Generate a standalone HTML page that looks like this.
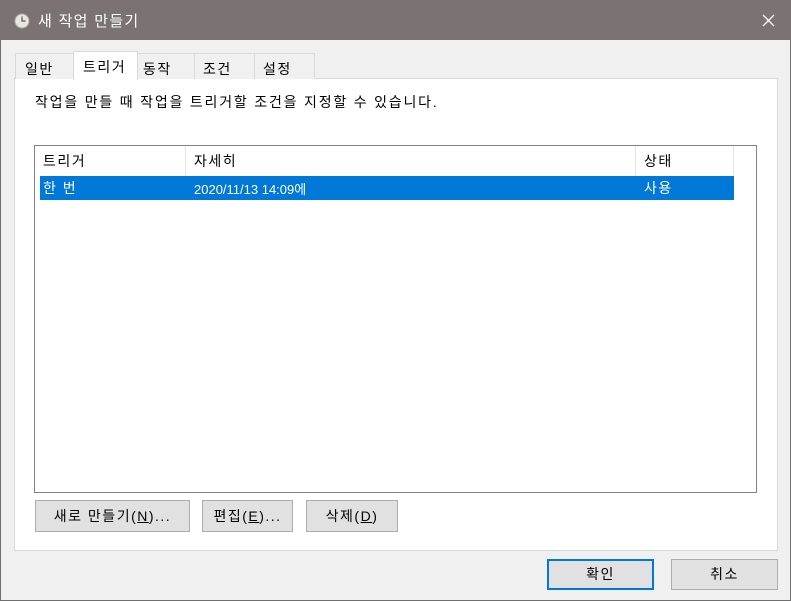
<!DOCTYPE html>
<html><head><meta charset="utf-8"><style>
*{margin:0;padding:0;box-sizing:border-box}
body{width:791px;height:601px;background:#f0f0f0;font-family:"Liberation Sans","Noto Sans CJK KR",sans-serif;font-size:14px;letter-spacing:1.5px;color:#000;position:relative;overflow:hidden}
.a{position:absolute;white-space:nowrap}
.btn{position:absolute;background:#e1e1e1;border:1px solid #adadad;text-align:center;white-space:nowrap}
</style></head><body>
<div class="a" style="left:0;top:0;width:791px;height:601px;border:1px solid #6f6f6f;border-top:none"></div>
<div class="a" style="left:0;top:0;width:791px;height:40px;background:#7a7371"></div>
<svg class="a" style="left:14px;top:13px" width="16" height="16"><circle cx="8" cy="8" r="7" fill="#e9e6e0" stroke="#b0aca5"/><path d="M8 3.5V8H11.5" stroke="#555" stroke-width="1.2" fill="none"/></svg>
<div class="a" style="left:38px;top:10px;color:#fff;font-size:15px;letter-spacing:1.3px">새 작업 만들기</div>
<svg class="a" style="left:762px;top:14px" width="13" height="13"><path d="M1 1L12 12M12 1L1 12" stroke="#fff" stroke-width="1.3"/></svg>
<div class="a" style="left:14px;top:78px;width:764px;height:473px;background:#fff;border:1px solid #d9d9d9"></div>
<div class="a" style="left:15px;top:53px;width:59px;height:26px;background:#f0f0f0;border:1px solid #d9d9d9;border-bottom:none;padding:5px 0 0 9px">일반</div>
<div class="a" style="left:135px;top:53px;width:60px;height:26px;background:#f0f0f0;border:1px solid #d9d9d9;border-bottom:none;border-left:none;padding:5px 0 0 8px">동작</div>
<div class="a" style="left:195px;top:53px;width:60px;height:26px;background:#f0f0f0;border:1px solid #d9d9d9;border-bottom:none;border-left:none;padding:5px 0 0 8px">조건</div>
<div class="a" style="left:255px;top:53px;width:60px;height:26px;background:#f0f0f0;border:1px solid #d9d9d9;border-bottom:none;border-left:none;padding:5px 0 0 8px">설정</div>
<div class="a" style="left:73px;top:51px;width:65px;height:29px;background:#fff;border:1px solid #d9d9d9;border-bottom:none;padding:5px 0 0 9px">트리거</div>
<div class="a" style="left:35px;top:92px;letter-spacing:1.8px">작업을 만들 때 작업을 트리거할 조건을 지정할 수 있습니다.</div>
<div class="a" style="left:34px;top:145px;width:723px;height:348px;border:1px solid #828282;background:#fff"></div>
<div class="a" style="left:185px;top:146px;width:1px;height:30px;background:#e5e5e5"></div>
<div class="a" style="left:635px;top:146px;width:1px;height:30px;background:#e5e5e5"></div>
<div class="a" style="left:733px;top:146px;width:1px;height:30px;background:#e5e5e5"></div>
<div class="a" style="left:43px;top:151px">트리거</div>
<div class="a" style="left:194px;top:151px">자세히</div>
<div class="a" style="left:644px;top:151px">상태</div>
<div class="a" style="left:40px;top:176px;width:694px;height:24px;background:#0078d7"></div>
<div class="a" style="left:43px;top:178px;color:#fff">한 번</div>
<div class="a" style="left:194px;top:179px;color:#fff;font-size:13px;letter-spacing:0">2020/11/13 14:09에</div>
<div class="a" style="left:644px;top:178px;color:#fff">사용</div>
<div class="btn" style="left:35px;top:500px;width:155px;height:32px;line-height:30px">새로 만들기(<u>N</u>)...</div>
<div class="btn" style="left:202px;top:500px;width:91px;height:32px;line-height:30px">편집(<u>E</u>)...</div>
<div class="btn" style="left:306px;top:500px;width:92px;height:32px;line-height:30px">삭제(<u>D</u>)</div>
<div class="btn" style="left:547px;top:559px;width:107px;height:31px;line-height:27px;border:2px solid #0078d7">확인</div>
<div class="btn" style="left:671px;top:559px;width:107px;height:31px;line-height:29px">취소</div>
</body></html>
